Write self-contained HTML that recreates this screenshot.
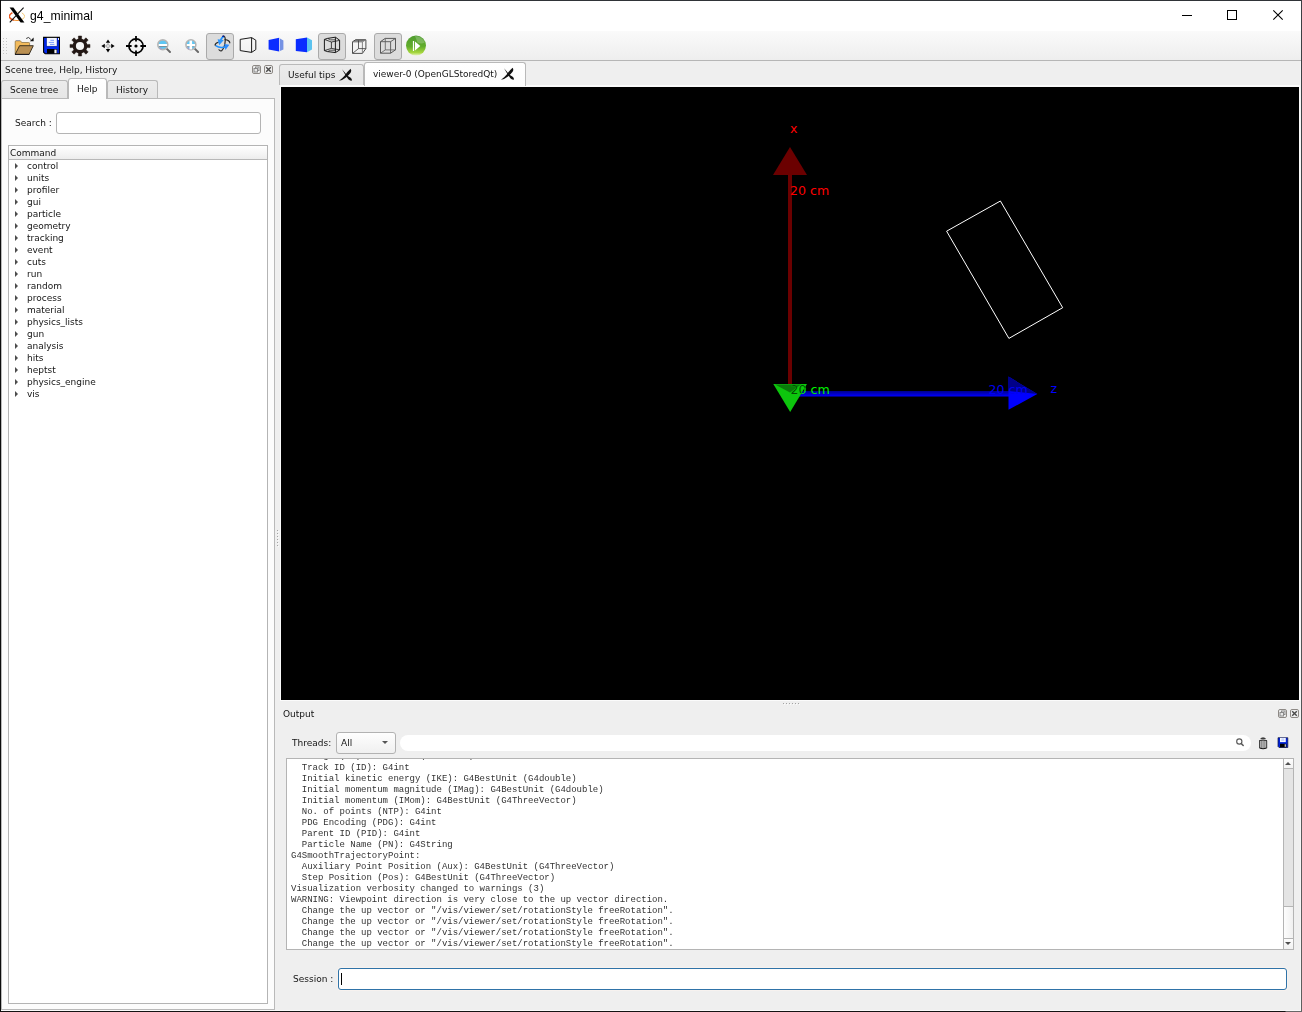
<!DOCTYPE html>
<html><head><meta charset="utf-8"><title>g4_minimal</title>
<style>
*{box-sizing:border-box;margin:0;padding:0}
html,body{width:1302px;height:1012px;overflow:hidden;background:#efefef}
body{position:relative;font-family:"DejaVu Sans","Liberation Sans",sans-serif;font-size:9px;color:#141414;line-height:12px}
.abs{position:absolute}
#win{position:absolute;left:0;top:0;width:1302px;height:1012px;background:#efefef;overflow:hidden}
#titlebar{left:1px;top:1px;width:1300px;height:30px;background:#fff}
#title{left:30px;top:8px;font-family:"Liberation Sans",sans-serif;font-size:12.2px;letter-spacing:.05px;line-height:16px;color:#000}
#toolbar{left:1px;top:31px;width:1300px;height:29px;background:linear-gradient(#fafafa,#eeeeee)}
#tbline{left:1px;top:60px;width:1300px;height:1px;background:#b6b6b6}
.chk{position:absolute;top:33px;width:28px;height:27px;border:1px solid #adadad;border-radius:3px;background:#dcdcdc}
.t{position:absolute;white-space:nowrap;will-change:transform}
.pane{position:absolute;background:#fcfcfc;border:1px solid #b9b9b9}
.tab{position:absolute;border:1px solid #b9b9b9;border-bottom:none;border-radius:3px 3px 0 0;background:linear-gradient(#ececec,#e6e6e6)}
.tab.on{background:linear-gradient(#ffffff,#fcfcfc)}
.dockbtn{position:absolute;width:9px;height:9px;border:1px solid #8d8985;border-radius:2px}
.r{position:relative;height:12px;line-height:12px;padding-left:18px;white-space:nowrap}
.r:before{content:"";position:absolute;left:6px;top:3px;border-left:3.5px solid #4d4d4d;border-top:3px solid transparent;border-bottom:3px solid transparent}
</style></head><body><div id="win">
<div id="titlebar" class="abs"></div>
<div id="title" class="t">g4_minimal</div>
<div id="toolbar" class="abs"></div>
<div id="tbline" class="abs"></div>
<!--TOOLBAR-->
<svg class="abs" style="left:0;top:31px" width="440" height="30" viewBox="0 31 440 30">
<g fill="#c6c6c6"><rect x="3" y="38" width="1" height="1"/><rect x="6" y="38" width="1" height="1"/><rect x="3" y="41" width="1" height="1"/><rect x="6" y="41" width="1" height="1"/><rect x="3" y="44" width="1" height="1"/><rect x="6" y="44" width="1" height="1"/><rect x="3" y="47" width="1" height="1"/><rect x="6" y="47" width="1" height="1"/><rect x="3" y="50" width="1" height="1"/><rect x="6" y="50" width="1" height="1"/><rect x="3" y="53" width="1" height="1"/><rect x="6" y="53" width="1" height="1"/></g>
<!-- folder -->
<path d="M15 54.3V41.8q0-1.2 1-1.2h3.8q.8 0 1.2.7l.6 1h7.2q1 0 1 1V54.3z" fill="#f3bb5c"/>
<path d="M15.2 54V41.8q0-1 1-1h3.6q.8 0 1.200.7l.6 1h7q1 0 1 1v2" fill="none" stroke="#8f7a52" stroke-width=".8"/>
<path d="M16 40.5h3.800" stroke="#8d97ab" stroke-width=".8"/>
<path d="M15.200 54.300L19.600 45.700H33.300L29.100 54.300z" fill="#b98f52" stroke="#2e2618" stroke-width=".9" stroke-linejoin="round"/>
<path d="M15 54.500H29.200" stroke="#1a1a22" stroke-width="1"/>
<path d="M26.2 38.500Q28.600 36 30.800 39.400" fill="none" stroke="#222" stroke-width=".9"/>
<path d="M33.600 37.600V41.200H29.800z" fill="#111"/>
<!-- save -->
<path d="M43.600 37.400H59.400V53.800H45.200L43.600 52.200z" fill="#0028f0" stroke="#000" stroke-width="1.100"/>
<rect x="46.600" y="37.900" width="10.400" height="8.300" fill="#f6f8ff"/>
<path d="M46.400 38v8.400h10.800V38" fill="none" stroke="#001a90" stroke-width=".6"/>
<path d="M50.400 40.300h3.600M48.800 42.400h5.200M50 44.400h4.400" stroke="#7a9cff" stroke-width="1"/>
<rect x="47" y="49" width="10.200" height="4.600" fill="#000"/>
<rect x="54.400" y="49.600" width="2.200" height="3.600" fill="#f4f4f4"/>
<rect x="58" y="38" width="1" height="2" fill="#dfe6ff"/>
<!-- gear -->
<path d="M78.38 39.39 L78.39 36.03 L81.61 36.03 L81.62 39.39 L83.53 40.19 L85.91 37.81 L88.19 40.09 L85.81 42.47 L86.61 44.38 L89.97 44.39 L89.97 47.61 L86.61 47.62 L85.81 49.53 L88.19 51.91 L85.91 54.19 L83.53 51.81 L81.62 52.61 L81.61 55.97 L78.39 55.97 L78.38 52.61 L76.47 51.81 L74.09 54.19 L71.81 51.91 L74.19 49.53 L73.39 47.62 L70.03 47.61 L70.03 44.39 L73.39 44.38 L74.19 42.47 L71.81 40.09 L74.09 37.81 L76.47 40.19Z" fill="#231815" stroke="#231815" stroke-width=".5" stroke-linejoin="round"/><circle cx="80" cy="46" r="7.3" fill="#231815"/><circle cx="80" cy="46" r="4.1" fill="#f5f5f5"/>
<!-- move -->
<g fill="#000"><path d="M108 39.4L110.2 42.8H105.8z"/><path d="M108 52.4L110.2 49H105.8z"/><path d="M101.4 46L104.8 43.8V48.2z"/><path d="M114.6 46L111.2 43.8V48.2z"/></g>
<g fill="#444"><rect x="107.5" y="43.5" width="1" height="1"/><rect x="107.5" y="47.5" width="1" height="1"/><rect x="105.5" y="45.5" width="1" height="1"/><rect x="109.5" y="45.5" width="1" height="1"/><rect x="106.5" y="44.5" width="1" height="1" opacity=".5"/><rect x="108.5" y="44.5" width="1" height="1" opacity=".5"/><rect x="106.5" y="46.5" width="1" height="1" opacity=".5"/><rect x="108.5" y="46.5" width="1" height="1" opacity=".5"/></g>
<!-- target -->
<circle cx="136" cy="46" r="7.1" fill="none" stroke="#000" stroke-width="1.7"/><circle cx="136" cy="46" r="1.6" fill="#000"/>
<path d="M136 36v5.6M136 50.4V56M126 46h5.6M140.4 46H146" stroke="#000" stroke-width="1.8"/>
<!-- zoom out -->
<path d="M166.600 48.600L170 52" stroke="#6a6a6a" stroke-width="2" stroke-linecap="round"/>
<circle cx="162.800" cy="44.800" r="4.900" fill="#5fc6f3" stroke="#b4b4b4" stroke-width="1.700"/><path d="M159 48.200Q160.500 49.400 162 49.600L161 47z" fill="#9a8fe0" opacity=".6"/><rect x="158.700" y="44" width="8.400" height="2.300" fill="#fff"/><rect x="158.900" y="46.200" width="8" height=".6" fill="#666"/>
<!-- zoom in -->
<path d="M194.700 48.600L198.100 52" stroke="#6a6a6a" stroke-width="2" stroke-linecap="round"/>
<circle cx="190.900" cy="44.800" r="4.900" fill="#5fc6f3" stroke="#b4b4b4" stroke-width="1.700"/><path d="M187 48.200Q188.500 49.400 190 49.600L189 47z" fill="#9a8fe0" opacity=".6"/><rect x="186.800" y="44" width="8.200" height="2.400" fill="#fff"/><rect x="189.500" y="40.600" width="2.600" height="8.800" fill="#fff"/><rect x="187" y="46.300" width="2.500" height=".5" fill="#777"/><rect x="192.100" y="46.300" width="2.500" height=".5" fill="#777"/>
<!-- checked buttons -->
<g fill="#dcdcdc" stroke="#aaa" stroke-width="1"><rect x="206.5" y="33.5" width="27" height="26" rx="2.5"/><rect x="318.5" y="33.5" width="27" height="26" rx="2.5"/><rect x="374.5" y="33.5" width="27" height="26" rx="2.5"/></g>
<!-- rotate -->
<path d="M218.2 42.2Q214.6 43.6 215.2 45.4M225 39.6Q229.6 40.2 229.8 42.8" fill="none" stroke="#2a2a2a" stroke-width="1.2" stroke-linecap="round"/>
<path d="M223.4 36.2Q225.6 36.4 225.2 41Q224.8 47.6 221.6 50.8Q220 51.4 219 49.8" fill="none" stroke="#2a2a2a" stroke-width="1.2" stroke-linecap="round"/>
<path d="M215.6 45.6Q219.6 48.4 225 47" fill="none" stroke="#1e90ff" stroke-width="1.5"/>
<path d="M224.3 44.1L229.4 44.7L225.4 50z" fill="#2b8cff"/>
<path d="M223.6 36.4Q221.6 37.6 220.6 40" fill="none" stroke="#1e90ff" stroke-width="1.8"/>
<path d="M217.6 39.2L223.8 39.9L219.2 45.2z" fill="#2b96ff"/>
<path d="M222.2 36.4Q223 35.8 224.2 36.4" stroke="#00108a" stroke-width="1.3" fill="none"/>
<!-- box hidden line -->
<path d="M240.2 39.4L251.6 37.6L255.8 40.2V49.6L251.6 52.4L240.2 50.6zM251.6 37.6V52.4" fill="none" stroke="#1a1a1a" stroke-width="1" stroke-linejoin="round"/>
<!-- solid blue 1 -->
<path d="M268.6 40L279.2 37.8V51.6L268.6 49.6z" fill="#0a2cff"/><path d="M280 38.6L283.4 40.6V49.4L280 51z" fill="#7592e4"/>
<!-- solid blue 2 -->
<path d="M295.8 39.2L307 37.5V52.2L295.8 51z" fill="#0a2cff"/><path d="M307 37.5L312 40.2V49.6L307 52.2z" fill="#5cc3ef"/>
<!-- perspective wire -->
<g fill="none" stroke="#1a1a1a" stroke-width="1" stroke-linejoin="round"><path d="M324.4 39.4L327.6 38.4L334 37.4L335.4 37.2L339.6 40.2V50L335.4 52.6L334 52.4L327.6 51.6L324.4 50.6z"/><path d="M335.4 37.2V52.6"/><path d="M324.4 39.4L331.4 42L339.6 40.4M324.4 50.6L331.4 48.4L339.6 49.8M331.4 42V48.4" stroke-width=".8"/><path d="M327.6 38.4Q329.6 40.6 335.4 39.8M327.6 51.6Q329.6 49.6 335.4 50.2" stroke-width=".7"/></g>
<!-- ortho cube -->
<path d="M352.5 41.8L355.6 39.6H366L362.4 41.8z" fill="#8c8c8c"/>
<g fill="none" stroke="#3c3c3c" stroke-width=".9" stroke-linejoin="round"><path d="M352.5 41.8L355.6 39.8H365.9V48.6L362.4 53.4H352.5z"/><path d="M352.5 41.9H362.4V53.4M362.4 41.9L365.9 39.8" stroke="#777" stroke-width=".9"/><path d="M358.5 40.5V48.6H365.9M358.5 48.6L352.8 53.2" stroke-width=".8"/></g>
<!-- cube 3 -->
<g fill="none" stroke="#484848" stroke-width=".9" stroke-linejoin="round"><path d="M380.500 41.700L385.200 38.400H395.500V49.800L390.600 53.200H380.500z"/><path d="M380.500 41.700H390.600V53.200M390.600 41.700L395.500 38.400" stroke="#555"/><path d="M385.300 38.400V49.900H395.500M385.300 49.900L380.500 53.200" stroke-width=".8" stroke="#5c5c5c"/></g>
<!-- play -->
<defs><linearGradient id="pg" x1="0" y1="0" x2="0" y2="1"><stop offset="0" stop-color="#4f9c30"/><stop offset=".55" stop-color="#62ad2c"/><stop offset=".85" stop-color="#a6d63e"/><stop offset="1" stop-color="#e6f4c0"/></linearGradient></defs>
<circle cx="416" cy="45.6" r="10" fill="url(#pg)"/>
<path d="M415 36Q421 35.800 425 42.200Q421.500 44.600 417.500 42.400z" fill="#fff" opacity=".22"/>
<rect x="412.900" y="41" width="1.200" height="10" fill="#fff"/>
<path d="M415 41.400L420.300 46L415 50.600z" fill="#fff"/>
</svg>
<!--/TOOLBAR-->
<!--LEFTDOCK-->
<div class="t" style="left:5px;top:64px;line-height:13px">Scene tree, Help, History</div>
<div class="dockbtn" style="left:252px;top:65px"><svg class="abs" style="left:0;top:0" width="7" height="7" viewBox="0 0 7 7"><rect x="2.5" y="1" width="3.5" height="3.5" fill="none" stroke="#8a8a8a" stroke-width="1"/><rect x="1" y="2.5" width="3.5" height="3.5" fill="#e8e8e8" stroke="#8a8a8a" stroke-width="1"/></svg></div>
<div class="dockbtn" style="left:264px;top:65px"><svg class="abs" style="left:0;top:0" width="7" height="7" viewBox="0 0 7 7"><path d="M1.2 1.2L5.8 5.8M5.8 1.2L1.2 5.8" stroke="#4a4a4a" stroke-width="1.4"/></svg></div>
<div class="pane" style="left:1px;top:98px;width:274px;height:912px"></div>
<div class="tab" style="left:1px;top:80px;width:67px;height:18px"></div>
<div class="tab" style="left:107px;top:80px;width:51px;height:18px"></div>
<div class="tab on" style="left:68px;top:78px;width:39px;height:21px"></div>
<div class="t" style="left:10px;top:84px;line-height:13px">Scene tree</div>
<div class="t" style="left:77px;top:83px;line-height:13px">Help</div>
<div class="t" style="left:116px;top:84px;line-height:13px">History</div>
<div class="t" style="left:15px;top:117px;line-height:13px">Search :</div>
<div class="abs" style="left:56px;top:112px;width:205px;height:22px;border:1px solid #b4b4b4;border-radius:3px;background:#fff"></div>
<div class="abs" style="left:8px;top:145px;width:260px;height:859px;border:1px solid #b4b4b4;background:#fff"></div>
<div class="abs" style="left:9px;top:146px;width:258px;height:14px;background:linear-gradient(#ffffff,#ededed);border-bottom:1px solid #b8b8b8"></div>
<div class="t" style="left:10px;top:147px;line-height:13px">Command</div>
<div id="tree" class="abs" style="left:9px;top:160px;width:258px;will-change:transform">
<div class="r">control</div><div class="r">units</div><div class="r">profiler</div><div class="r">gui</div><div class="r">particle</div><div class="r">geometry</div><div class="r">tracking</div><div class="r">event</div><div class="r">cuts</div><div class="r">run</div><div class="r">random</div><div class="r">process</div><div class="r">material</div><div class="r">physics_lists</div><div class="r">gun</div><div class="r">analysis</div><div class="r">hits</div><div class="r">heptst</div><div class="r">physics_engine</div><div class="r">vis</div>
</div>
<!--/LEFTDOCK-->
<!--CENTER-->
<div class="abs" style="left:280px;top:85px;width:1020px;height:616px;background:#fbfbfb"></div>
<div class="tab" style="left:279px;top:64px;width:85px;height:21px"></div>
<div class="tab on" style="left:364px;top:62px;width:162px;height:24px"></div>
<div class="t" style="left:288px;top:69px;line-height:13px">Useful tips</div>
<div class="t" style="left:373px;top:68px;line-height:13px">viewer-0 (OpenGLStoredQt)</div>
<svg class="abs" style="left:338px;top:68px" width="16" height="14" viewBox="0 0 16 14"><path d="M4 1.200Q6.500 4 9 7.200Q10.600 8.600 12.400 9.400Q14.300 10.600 13.900 12.600Q12 13 10.300 11.200Q8.600 8.800 7.600 7.200Q5.800 4.200 4 1.200Z" fill="#111"/><path d="M12.600 .8Q14 2.600 12.600 4.800Q10.600 7.400 8 9.600Q4.600 12.400 1 12.800Q4.800 10 7.200 7Q9.400 3.600 12.600 .8Z" fill="#111"/></svg>
<svg class="abs" style="left:500px;top:67px" width="16" height="14" viewBox="0 0 16 14"><path d="M4 1.200Q6.500 4 9 7.200Q10.600 8.600 12.400 9.400Q14.300 10.600 13.900 12.600Q12 13 10.300 11.200Q8.600 8.800 7.600 7.200Q5.800 4.200 4 1.200Z" fill="#111"/><path d="M12.600 .8Q14 2.600 12.600 4.800Q10.600 7.400 8 9.600Q4.600 12.400 1 12.800Q4.800 10 7.200 7Q9.400 3.600 12.600 .8Z" fill="#111"/></svg>

<svg class="abs" style="left:281px;top:87px" width="1018" height="613" viewBox="281 87 1018 613" font-family="DejaVu Sans, sans-serif" font-size="12.6px">
<rect x="281" y="87" width="1018" height="613" fill="#000"/>
<polygon points="1000.4,201 946.6,231.2 1008.9,338.4 1062.7,307.7" fill="none" stroke="#fff" stroke-width="1"/>
<rect x="788" y="170" width="4" height="216" fill="#6b0000"/>
<polygon points="790,147 773,175 807,175" fill="#6b0000"/>
<defs><linearGradient id="bl" x1="0" y1="0" x2="0" y2="1"><stop offset="0" stop-color="#00008c"/><stop offset="1" stop-color="#0000ff"/></linearGradient></defs>
<rect x="796" y="391" width="214" height="5.5" fill="url(#bl)"/>
<polygon points="1008.5,376.6 1037.3,394 1008.5,409.8" fill="#0000ff"/>
<polygon points="1008.5,376.6 1037.3,394 1008.5,391" fill="#000088"/>
<polygon points="773.3,384 807,384 790.2,412" fill="#0dc50d"/>
<polygon points="775,384.5 801,384.5 790,392.5" fill="#0a7a0a"/>
<text x="790" y="133" fill="#ff0000">x</text>
<text x="790" y="195" fill="#ff0000">20 cm</text>
<text x="790.5" y="394" fill="#00f000">20 cm</text>
<clipPath id="gt"><polygon points="773.3,384 807,384 790.2,412"/></clipPath>
<text x="790.5" y="394" fill="#054a05" clip-path="url(#gt)">20 cm</text>
<text x="988.5" y="394" fill="#0000f0">20 cm</text>
<text x="1050.5" y="393" fill="#0000ff">z</text>
</svg>
<!--/CENTER-->
<!--OUTPUT-->
<div class="t" style="left:283px;top:708px;line-height:13px">Output</div>
<div class="dockbtn" style="left:1278px;top:709px"><svg class="abs" style="left:0;top:0" width="7" height="7" viewBox="0 0 7 7"><rect x="2.5" y="1" width="3.5" height="3.5" fill="none" stroke="#8a8a8a" stroke-width="1"/><rect x="1" y="2.5" width="3.5" height="3.5" fill="#e8e8e8" stroke="#8a8a8a" stroke-width="1"/></svg></div>
<div class="dockbtn" style="left:1290px;top:709px"><svg class="abs" style="left:0;top:0" width="7" height="7" viewBox="0 0 7 7"><path d="M1.2 1.2L5.8 5.8M5.8 1.2L1.2 5.8" stroke="#4a4a4a" stroke-width="1.4"/></svg></div>
<div class="t" style="left:291.5px;top:737px;line-height:13px">Threads:</div>
<div class="abs" style="left:336px;top:732px;width:60px;height:22px;border:1px solid #b2b2b2;border-radius:3px;background:linear-gradient(#fefefe,#f0f0f0)"></div>
<div class="t" style="left:341px;top:737px;line-height:13px">All</div>
<div class="abs" style="left:381.6px;top:741.4px;border-top:3.6px solid #555;border-left:3.2px solid transparent;border-right:3.2px solid transparent"></div>
<div class="abs" style="left:400px;top:735px;width:851px;height:16px;border-radius:8px;background:#fff"></div>
<svg class="abs" style="left:1234px;top:737px" width="12" height="11" viewBox="0 0 12 11"><circle cx="5.300" cy="4.500" r="2.600" fill="none" stroke="#5a5a5a" stroke-width="1.150"/><path d="M7.300 6.600L9.200 8.500" stroke="#5a5a5a" stroke-width="1.500" stroke-linecap="round"/></svg>
<svg class="abs" style="left:1257px;top:735px" width="12" height="16" viewBox="0 0 12 16"><path d="M3 3.800Q6 1 9.200 3.800z" fill="#000"/><path d="M2.3 5.7Q6 4.5 9.9 5.7" fill="none" stroke="#111" stroke-width="1.1"/><path d="M2.6 5.8h7v7.4q-3.500 1-7 0z" fill="#c2c2c2"/><path d="M2.600 5.600v7.600M9.700 5.600v7.600" stroke="#222" stroke-width=".9"/><path d="M4.400 6v7M6.100 6v7.200M7.800 6v7" stroke="#6e6e6e" stroke-width=".7"/><path d="M2.8 13.1Q6 14.3 9.5 13.1" fill="none" stroke="#111" stroke-width="1.1"/></svg>
<svg class="abs" style="left:1277px;top:737px" width="12" height="12" viewBox="0 0 12 12"><path d="M1 .7H10.8V10.5H2L1 9.5z" fill="#0022d8" stroke="#101440" stroke-width=".7"/><rect x="3" y=".9" width="5.8" height="4.2" fill="#f6f8ff"/><path d="M4.6 2h2.6M4.2 3.2h3" stroke="#9ab2ff" stroke-width=".7"/><rect x="3" y="6.8" width="6.4" height="3.5" fill="#000"/><rect x="7.7" y="7.3" width="1.1" height="2.5" fill="#e8e8e8"/></svg>
<div class="abs" style="left:286px;top:758px;width:1008px;height:192px;border:1px solid #b4b4b4;background:#fff;overflow:hidden">
<pre id="log" style="will-change:transform;position:absolute;left:4.2px;top:-7px;font-family:'Liberation Mono','DejaVu Sans Mono',monospace;font-size:9px;line-height:11px;letter-spacing:-0.012px;color:#333"><span style="position:relative;top:-1px">  Charge (Ch): unit: e+ (G4double)</span>
  Track ID (ID): G4int
  Initial kinetic energy (IKE): G4BestUnit (G4double)
  Initial momentum magnitude (IMag): G4BestUnit (G4double)
  Initial momentum (IMom): G4BestUnit (G4ThreeVector)
  No. of points (NTP): G4int
  PDG Encoding (PDG): G4int
  Parent ID (PID): G4int
  Particle Name (PN): G4String
G4SmoothTrajectoryPoint:
  Auxiliary Point Position (Aux): G4BestUnit (G4ThreeVector)
  Step Position (Pos): G4BestUnit (G4ThreeVector)
Visualization verbosity changed to warnings (3)
WARNING: Viewpoint direction is very close to the up vector direction.
  Change the up vector or "/vis/viewer/set/rotationStyle freeRotation".
  Change the up vector or "/vis/viewer/set/rotationStyle freeRotation".
  Change the up vector or "/vis/viewer/set/rotationStyle freeRotation".
  Change the up vector or "/vis/viewer/set/rotationStyle freeRotation".</pre>
<div class="abs" style="right:0;top:0;width:10px;height:190px;background:#e4e4e4;border-left:1px solid #b4b4b4"></div>
<div class="abs" style="right:0;top:0;width:10px;height:10px;background:linear-gradient(#fdfdfd,#f2f2f2);border-left:1px solid #b4b4b4;border-bottom:1px solid #b4b4b4"></div>
<div class="abs" style="right:0;bottom:0;width:10px;height:11px;background:linear-gradient(#fdfdfd,#f2f2f2);border-left:1px solid #b4b4b4;border-top:1px solid #b4b4b4"></div>
<div class="abs" style="right:0;top:147px;width:10px;height:32px;background:linear-gradient(90deg,#fdfdfd,#f0f0f0);border-left:1px solid #b4b4b4;border-top:1px solid #b4b4b4"></div>
<div class="abs" style="right:2px;top:3.2px;border-bottom:3px solid #505050;border-left:3px solid transparent;border-right:3px solid transparent"></div>
<div class="abs" style="right:2px;bottom:3.6px;border-top:3px solid #505050;border-left:3px solid transparent;border-right:3px solid transparent"></div>
</div>
<div class="t" style="left:293px;top:973px;line-height:13px">Session :</div>
<div class="abs" style="left:338px;top:968px;width:949px;height:22px;border:1px solid #2f73a8;border-radius:3px;background:#fff;box-shadow:0 0 0 1px rgba(255,245,240,.5)"></div>
<div class="abs" style="left:341px;top:973px;width:1px;height:12px;background:#000"></div>
<!--/OUTPUT-->
<!--BORDERS--><svg class="abs" style="left:0;top:0;pointer-events:none" width="1302" height="1012"><rect x="784" y="704" width="1" height="1" fill="#fbfbfb"/><rect x="783" y="703" width="1" height="1" fill="#a4a4a4"/><rect x="787" y="704" width="1" height="1" fill="#fbfbfb"/><rect x="786" y="703" width="1" height="1" fill="#a4a4a4"/><rect x="790" y="704" width="1" height="1" fill="#fbfbfb"/><rect x="789" y="703" width="1" height="1" fill="#a4a4a4"/><rect x="793" y="704" width="1" height="1" fill="#fbfbfb"/><rect x="792" y="703" width="1" height="1" fill="#a4a4a4"/><rect x="796" y="704" width="1" height="1" fill="#fbfbfb"/><rect x="795" y="703" width="1" height="1" fill="#a4a4a4"/><rect x="799" y="704" width="1" height="1" fill="#fbfbfb"/><rect x="798" y="703" width="1" height="1" fill="#a4a4a4"/><rect x="278" y="531" width="1" height="1" fill="#fbfbfb"/><rect x="277" y="530" width="1" height="1" fill="#a4a4a4"/><rect x="278" y="534" width="1" height="1" fill="#fbfbfb"/><rect x="277" y="533" width="1" height="1" fill="#a4a4a4"/><rect x="278" y="537" width="1" height="1" fill="#fbfbfb"/><rect x="277" y="536" width="1" height="1" fill="#a4a4a4"/><rect x="278" y="540" width="1" height="1" fill="#fbfbfb"/><rect x="277" y="539" width="1" height="1" fill="#a4a4a4"/><rect x="278" y="543" width="1" height="1" fill="#fbfbfb"/><rect x="277" y="542" width="1" height="1" fill="#a4a4a4"/><rect x="278" y="546" width="1" height="1" fill="#fbfbfb"/><rect x="277" y="545" width="1" height="1" fill="#a4a4a4"/></svg>

<svg class="abs" style="left:9px;top:7px" width="16" height="16" viewBox="0 0 16 16">
<path d="M3.4 5.6Q.2 7.6 .3 9.4Q.6 12 5 13.2" fill="none" stroke="#e9551b" stroke-width="1.5"/>
<path d="M5 13.2Q8 13.9 11 13.2" fill="none" stroke="#f0953a" stroke-width="1"/>
<path d="M11 13.2Q15.4 12 15.7 9.4Q15.8 7.6 12.8 5.8" fill="none" stroke="#f6cc7a" stroke-width="1"/>
<path d="M5.6 5Q8 4.4 10.6 5" fill="none" stroke="#f8d8b0" stroke-width=".7"/>
<path d="M.6 .6H4.4L15.4 15.4H11.6z" fill="#000"/>
<path d="M14.6 .6L.8 15.4" stroke="#111" stroke-width="1.1"/>
</svg>
<svg class="abs" style="left:1170px;top:1px" width="130" height="30" viewBox="1170 1 130 30" fill="none" stroke="#000" stroke-width="1">
<path d="M1182 15.5H1192"/><rect x="1227.5" y="10.5" width="9" height="9"/><path d="M1273.3 10.3L1282.7 19.7M1282.7 10.3L1273.3 19.7" stroke-width="1.1"/>
</svg>
<div class="abs" style="left:0;top:1010px;width:1302px;height:1px;background:#f9f9f9"></div>
<div class="abs" style="left:1300px;top:61px;width:1px;height:950px;background:#f6f6f6"></div>
<div class="abs" style="left:0;top:0;width:1302px;height:1px;background:#2f3337"></div>
<div class="abs" style="left:0;top:0;width:1px;height:1012px;background:#0c0c0c"></div>
<div class="abs" style="left:1301px;top:0;width:1px;height:1012px;background:linear-gradient(#3a3f43,#5f5f5f)"></div>
<div class="abs" style="left:0;top:1011px;width:1302px;height:1px;background:linear-gradient(90deg,#141212 0,#141212 1285px,#686868 1286px)"></div>
<!--/BORDERS-->
</div></body></html>
